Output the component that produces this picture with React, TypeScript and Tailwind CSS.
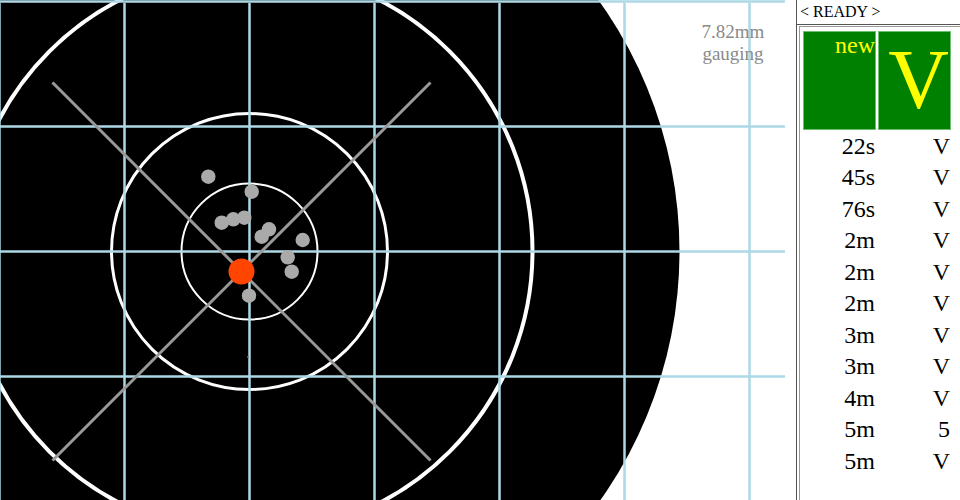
import React from 'react'

const CX = 249.5
const CY = 251.5

// shot positions on the target, oldest first
const shots: [number, number][] = [
  [208.3, 176.7],
  [251.7, 191.7],
  [221.7, 222.7],
  [233.3, 219.3],
  [244.3, 217.7],
  [261.7, 236.7],
  [269, 229.3],
  [302.7, 240],
  [287.7, 257.3],
  [291.7, 271.7],
  [249, 295.7],
]

const history: { t: string; s: string }[] = [
  { t: '22s', s: 'V' },
  { t: '45s', s: 'V' },
  { t: '76s', s: 'V' },
  { t: '2m', s: 'V' },
  { t: '2m', s: 'V' },
  { t: '2m', s: 'V' },
  { t: '3m', s: 'V' },
  { t: '3m', s: 'V' },
  { t: '4m', s: 'V' },
  { t: '5m', s: '5' },
  { t: '5m', s: 'V' },
]

const gridX = [-0.5, 124.5, 249.5, 374.5, 499.5, 624.5, 749.5]
const gridY = [1.5, 126.5, 251.5, 376.5, 501.5]

const Target: React.FC = () => {
  const last: [number, number] = [241.5, 271.5]
  const arm = 189
  return (
    <div className="relative w-[796px] h-[500px] overflow-hidden bg-white">
      <svg width="796" height="500" viewBox="0 0 796 500" className="block">
        <circle cx={CX} cy={CY} r={430} fill="#000" />
        <circle cx={CX} cy={CY} r={283} fill="none" stroke="#fff" strokeWidth={4} />
        <circle cx={CX} cy={CY} r={138} fill="none" stroke="#fff" strokeWidth={3} />
        <circle cx={CX} cy={CY} r={68} fill="none" stroke="#fff" strokeWidth={2} />
        {gridX.map((x) => (
          <line key={'x' + x} x1={x} y1={3} x2={x} y2={500} stroke="#add8e6" strokeWidth={2.5} />
        ))}
        {gridY.map((y) => (
          <line key={'y' + y} x1={0} y1={y} x2={785} y2={y} stroke="#add8e6" strokeWidth={2.5} />
        ))}
        {/* crosshair through latest shot */}
        <line x1={last[0] - arm} y1={last[1] - arm} x2={last[0] + arm} y2={last[1] + arm} stroke="#999" strokeWidth={3} />
        <line x1={last[0] - arm} y1={last[1] + arm} x2={last[0] + arm} y2={last[1] - arm} stroke="#999" strokeWidth={3} />
        {shots.map(([x, y], i) => (
          <circle key={i} cx={x} cy={y} r={7.2} fill="#aaa" />
        ))}
        <circle cx={248} cy={357} r={1} fill="#777" />
        <circle cx={last[0]} cy={last[1]} r={13} fill="#ff4500" />
      </svg>
      <div className="absolute left-[690px] top-[21px] w-[86px] text-center text-[19px] leading-[22px] text-[#8a8a8a] font-['Liberation_Serif','Times_New_Roman',serif]">
        <div>7.82mm</div>
        <div>gauging</div>
      </div>
    </div>
  )
}

const Panel: React.FC = () => (
  <div className="flex-1 h-[500px] border-l border-[#555] bg-white font-['Liberation_Serif','Times_New_Roman',serif] text-black">
    <div className="h-[25px] border-b border-[#555] pl-[3px] text-[16px] leading-[24px]">&lt; READY &gt;</div>
    <div className="mt-[1px] ml-[2px] h-[474px] border-t border-l border-[#999] pt-[4px] pl-[3px]">
      <div className="grid grid-cols-[73px_73px] gap-x-[2px]">
        <div className="h-[99px] bg-[#008000] border border-[#6cbf6c] text-right text-[24px] leading-[27px] text-[#ffff00]">
          new
        </div>
        <div className="h-[99px] bg-[#008000] border border-[#6cbf6c] text-right pr-[1px] text-[84px] leading-[96px] text-[#ffff00]">
          V
        </div>
      </div>
      <div>
        {history.map((h, i) => (
          <div
            key={i}
            className="grid grid-cols-[73px_73px] gap-x-[2px] h-[31.5px] items-center text-[24px] leading-[28px]"
          >
            <div className="text-right pr-[1px]">{h.t}</div>
            <div className="text-right pr-[1px]">{h.s}</div>
          </div>
        ))}
      </div>
    </div>
  </div>
)

export default function App() {
  return (
    <div className="flex w-[960px] h-[500px] overflow-hidden bg-white">
      <Target />
      <Panel />
    </div>
  )
}
